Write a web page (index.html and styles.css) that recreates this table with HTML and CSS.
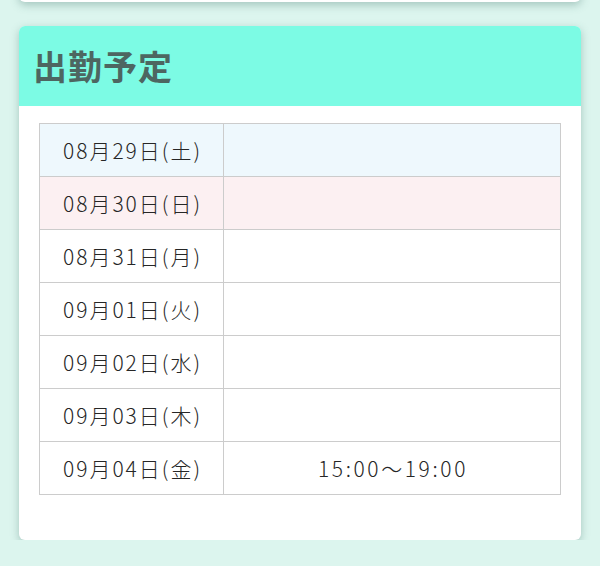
FILE: index.html
```html
<!DOCTYPE html>
<html lang="ja">
<head>
    <meta charset="UTF-8">
    <meta name="viewport" content="width=device-width, initial-scale=1.0">
    <title>出勤予定</title>
    <link rel="stylesheet" href="styles.css">
</head>
<body>
    <div class="card card-prev"></div>

    <div class="card">
        <h2 class="card-title">出勤予定</h2>
        <div class="card-body">
            <table class="schedule">
                <tr class="sat">
                    <td class="day">08月29日(土)</td>
                    <td class="time"></td>
                </tr>
                <tr class="sun">
                    <td class="day">08月30日(日)</td>
                    <td class="time"></td>
                </tr>
                <tr>
                    <td class="day">08月31日(月)</td>
                    <td class="time"></td>
                </tr>
                <tr>
                    <td class="day">09月01日(火)</td>
                    <td class="time"></td>
                </tr>
                <tr>
                    <td class="day">09月02日(水)</td>
                    <td class="time"></td>
                </tr>
                <tr>
                    <td class="day">09月03日(木)</td>
                    <td class="time"></td>
                </tr>
                <tr>
                    <td class="day">09月04日(金)</td>
                    <td class="time">15:00〜19:00</td>
                </tr>
            </table>
        </div>
    </div>
</body>
</html>
```

FILE: styles.css
```css
body {
    font-family: "Noto Sans CJK JP", "Noto Sans", sans-serif;
    background: #dcf5ee;
    color: #333;
    margin: 0;
    padding: 0 19px;
}
.card {
    background: #fff;
    border-radius: 6px;
    box-shadow: 0 3px 8px rgba(60, 110, 100, 0.35);
    overflow: hidden;
}
.card-prev {
    height: 40px;
    margin-top: -38px;
    margin-bottom: 24px;
}
.card-title {
    margin: 0;
    height: 80px;
    line-height: 80px;
    padding-left: 14px;
    background: #7cfbe4;
    color: #4d6661;
    font-size: 34px;
    font-weight: bold;
    letter-spacing: 1px;
}
.card-body {
    padding: 17px 20px 45px;
}
.schedule {
    width: 100%;
    border-collapse: collapse;
    color: #262626;
    font-size: 21px;
    font-weight: 300;
    letter-spacing: 2px;
}
.schedule td {
    border: 1px solid #cccccc;
    height: 52px;
    padding: 0 0 0 2px;
    text-align: center;
}
.schedule .day {
    width: 181px;
}
.schedule .time {
    letter-spacing: 2.6px;
}
.sat td {
    background: #eef8fd;
}
.sun td {
    background: #fcf0f2;
}
```
